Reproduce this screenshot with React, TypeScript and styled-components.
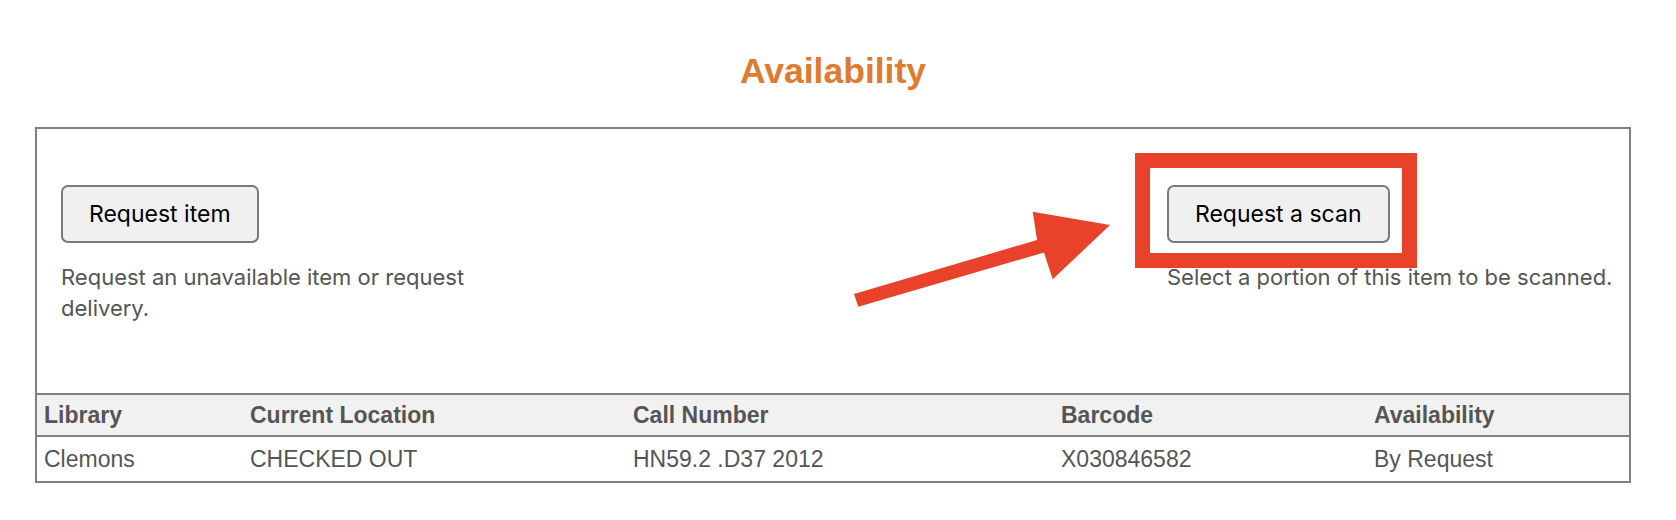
import * as React from 'react'
import styled, { createGlobalStyle } from 'styled-components'

const GlobalStyle = createGlobalStyle`
    html, body {
        margin: 0;
        padding: 0;
        background: #ffffff;
    }
    body {
        font-family: Inter, "Liberation Sans", Arial, sans-serif;
    }
`

const columns = [
    { key: 'library', title: 'Library', width: 206 },
    { key: 'location', title: 'Current Location', width: 383 },
    { key: 'callNumber', title: 'Call Number', width: 428 },
    { key: 'barcode', title: 'Barcode', width: 313 },
    { key: 'availability', title: 'Availability', width: 262 },
]

const items = [
    {
        library: 'Clemons',
        location: 'CHECKED OUT',
        callNumber: 'HN59.2 .D37 2012',
        barcode: 'X030846582',
        availability: 'By Request',
    },
]

const Availability = (): JSX.Element => {
    return (
        <Page>
            <GlobalStyle />
            <Title>Availability</Title>
            <Panel>
                <Actions>
                    <Action>
                        <Button>Request item</Button>
                        <Hint>Request an unavailable item or request delivery.</Hint>
                    </Action>
                    <Action>
                        <Button>Request a scan</Button>
                        <Hint>Select a portion of this item to be scanned.</Hint>
                    </Action>
                </Actions>
                <Table>
                    <colgroup>
                        {columns.map((c) => (
                            <col key={c.key} style={{ width: c.width }} />
                        ))}
                    </colgroup>
                    <thead>
                        <tr>
                            {columns.map((c) => (
                                <Th key={c.key}>{c.title}</Th>
                            ))}
                        </tr>
                    </thead>
                    <tbody>
                        {items.map((item) => (
                            <tr key={item.barcode}>
                                {columns.map((c) => (
                                    <Td key={c.key}>{item[c.key as keyof typeof item]}</Td>
                                ))}
                            </tr>
                        ))}
                    </tbody>
                </Table>
            </Panel>

            {/* annotation drawn over the screenshot */}
            <Highlight />
            <Arrow viewBox="0 0 300 130" width="300" height="130">
                <polygon
                    fill="#e9422a"
                    points="14,104 197,50 192.7,21.7 270,35 212.7,89.3 204,62.5 18.3,116.7"
                />
            </Arrow>
        </Page>
    )
}

const Page = styled.div`
    position: relative;
    width: 1676px;
    height: 520px;
    padding-top: 51px;
    box-sizing: border-box;
`
const Title = styled.h2`
    margin: 0 0 36px 35px;
    width: 1596px;
    text-align: center;
    font-family: "Liberation Sans", Arial, sans-serif;
    font-size: 35.5px;
    line-height: 40px;
    font-weight: 700;
    color: #df7a2e;
`
const Panel = styled.div`
    margin-left: 35px;
    width: 1596px;
    box-sizing: border-box;
    border: 2px solid #808080;
`
const Actions = styled.div`
    display: flex;
    justify-content: space-between;
    box-sizing: border-box;
    height: 264px;
    padding: 56px 12px 0 24px;
`
const Action = styled.div`
    display: flex;
    flex-direction: column;
    align-items: flex-start;
    width: 450px;
`
const Button = styled.button`
    box-sizing: border-box;
    height: 58px;
    padding: 0 26px;
    border: 2px solid #7a7a7a;
    border-radius: 7px;
    background: #f0f0f0;
    color: #000;
    font-family: Inter, "Liberation Sans", Arial, sans-serif;
    font-size: 23px;
    line-height: 28px;
`
const Hint = styled.p`
    margin: 19px 0 0;
    font-size: 22px;
    line-height: 31px;
    color: #555;
`
const Table = styled.table`
    width: 100%;
    border-collapse: collapse;
    table-layout: fixed;
    font-family: "Liberation Sans", Arial, sans-serif;
    font-size: 23px;
    color: #555;
`
const Th = styled.th`
    height: 40px;
    padding: 0 7px;
    text-align: left;
    font-weight: 700;
    background: #f1f1f1;
    border-top: 2px solid #808080;
    border-bottom: 2px solid #808080;
`
const Td = styled.td`
    height: 44px;
    padding: 0 7px;
    text-align: left;
`
const Highlight = styled.div`
    position: absolute;
    left: 1135px;
    top: 153px;
    width: 282px;
    height: 115px;
    box-sizing: border-box;
    border: 15px solid #e9422a;
`
const Arrow = styled.svg`
    position: absolute;
    left: 840px;
    top: 190px;
`

export default Availability
